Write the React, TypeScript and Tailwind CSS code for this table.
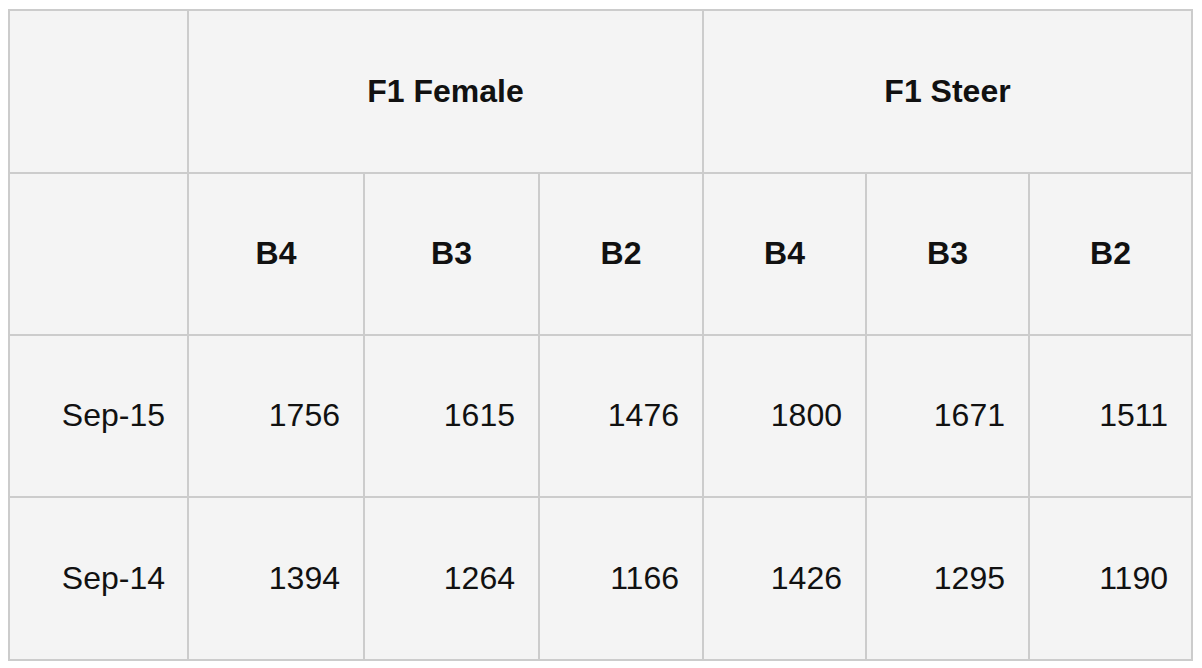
const rows = [
  { label: "Sep-15", values: [1756, 1615, 1476, 1800, 1671, 1511] },
  { label: "Sep-14", values: [1394, 1264, 1166, 1426, 1295, 1190] },
];

const cell = "border-r-2 border-b-2 border-[#cccccc] flex items-center pb-[2px]";

export default function App() {
  return (
    <div className="bg-white min-h-[668px] pl-[8px] pt-[9px] font-['Liberation_Sans',Arial,sans-serif] text-[32px] text-[#111]">
      <div className="grid w-[1185px] grid-cols-[179px_176px_175px_164px_163px_163px_163px] grid-rows-[163px_162px_162px_163px] border-l-2 border-t-2 border-[#cccccc] bg-[#f4f4f4]">
        <div className={cell} />
        <div className={`${cell} col-span-3 justify-center font-bold`}>F1 Female</div>
        <div className={`${cell} col-span-3 justify-center font-bold`}>F1 Steer</div>

        <div className={cell} />
        {["B4", "B3", "B2", "B4", "B3", "B2"].map((h, i) => (
          <div key={i} className={`${cell} justify-center font-bold`}>
            {h}
          </div>
        ))}

        {rows.map((r) => (
          <div key={r.label} className="contents">
            <div className={`${cell} justify-end pr-[22px]`}>{r.label}</div>
            {r.values.map((v, i) => (
              <div key={i} className={`${cell} justify-end pr-[23px]`}>
                {v}
              </div>
            ))}
          </div>
        ))}
      </div>
    </div>
  );
}
